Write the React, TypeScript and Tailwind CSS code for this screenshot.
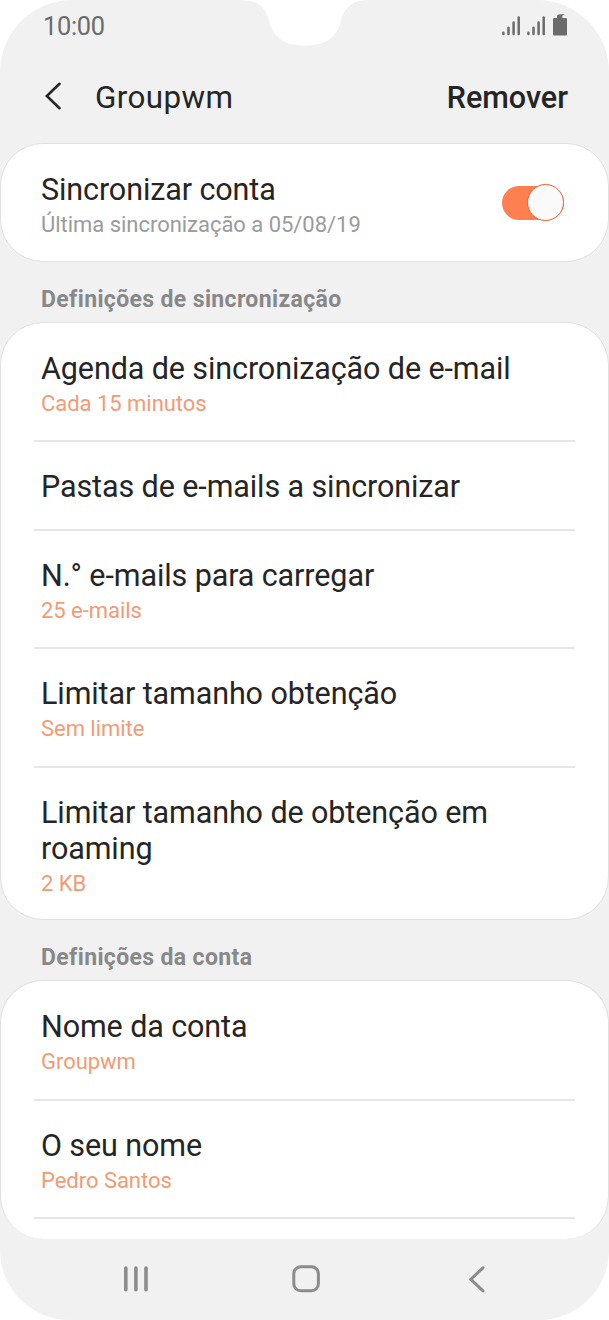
type Setting = { title: string; value?: string; box: string };

const syncSettings: Setting[] = [
  { title: "Agenda de sincronização de e-mail", value: "Cada 15 minutos", box: "h-[119px] pt-[28px]" },
  { title: "Pastas de e-mails a sincronizar", box: "h-[89px] pt-[27px]" },
  { title: "N.° e-mails para carregar", value: "25 e-mails", box: "h-[118px] pt-[27px]" },
  { title: "Limitar tamanho obtenção", value: "Sem limite", box: "h-[119px] pt-[27px]" },
  { title: "Limitar tamanho de obtenção em roaming", value: "2 KB", box: "h-[151px] pt-[27px]" },
];

const accountSettings: Setting[] = [
  { title: "Nome da conta", value: "Groupwm", box: "h-[120px] pt-[28px]" },
  { title: "O seu nome", value: "Pedro Santos", box: "h-[118px] pt-[27px]" },
];

function SettingRow({ item, divider }: { item: Setting; divider: boolean }) {
  return (
    <div
      className={`${item.box} mx-[33px] shrink-0 pl-[7px] ${divider ? "border-b-2 border-[#e6e6e6]" : ""}`}
    >
      <div className="text-[30.5px] leading-[36px] tracking-[-0.1px] text-[#252525]">{item.title}</div>
      {item.value && <div className="text-[22px] leading-[34px] tracking-[-0.03px] text-[#f29b75]">{item.value}</div>}
    </div>
  );
}

function SectionTitle({ children }: { children: string }) {
  return (
    <h2 className="flex h-[60px] shrink-0 items-center pl-[41px] pt-[14px] text-[23px] leading-[27px] font-bold tracking-[0.36px] text-[#888888]">
      {children}
    </h2>
  );
}

function SignalIcon() {
  return (
    <svg width="18" height="20" viewBox="0 0 18 20" className="shrink-0" stroke="#6b6b6b" strokeWidth="2.5" strokeLinecap="round">
      <path d="M1.4 16.7v1.3M6.5 11.7v6.3M11.6 6.6v11.4M16.7 1.6v16.4" />
    </svg>
  );
}

function StatusBar() {
  return (
    <div className="flex h-[52px] shrink-0 items-center justify-between pl-[43px] pr-[42px]">
      <span className="text-[25.4px] leading-[30px] tracking-[-0.3px] text-[#6b6b6b]">10:00</span>
      <div className="flex items-center">
        <SignalIcon />
        <span className="w-[7px]" />
        <SignalIcon />
        <svg width="14" height="22" viewBox="0 0 14 22" className="mb-[2px] ml-2" fill="#6b6b6b">
          <path d="M0 5.3Q0 4 1.3 4H4V1.8L5.5.6 12 0 9.3 1.6V4h3.4Q14 4 14 5.3v15Q14 21.6 12.7 21.6H1.3Q0 21.6 0 20.3Z" />
        </svg>
      </div>
    </div>
  );
}

function Header() {
  return (
    <header className="flex h-[91px] shrink-0 items-center pl-[45px] pr-[41px]">
      <svg width="16" height="28" viewBox="0 0 16 28" className="mb-[3px]" fill="none" stroke="#252525" strokeWidth="2.6" strokeLinecap="round">
        <path d="M14.5 1.8 1.8 14l12.7 12.2" />
      </svg>
      <h1 className="ml-[34px] text-[31.4px] leading-[36px] tracking-[0.4px] text-[#252525]">Groupwm</h1>
      <button className="ml-auto text-[30.5px] leading-[36px] font-medium text-[#252525]">Remover</button>
    </header>
  );
}

function NavigationBar() {
  return (
    <nav className="flex h-[81px] shrink-0 items-center justify-between pb-[2px] pl-[123px] pr-[124px]">
      <svg width="26" height="28" viewBox="0 0 26 28" stroke="#8c8c8c" strokeWidth="3.6" strokeLinecap="round">
        <path d="M2.8 3v21.8M12.9 3v21.8M23 3v21.8" />
      </svg>
      <svg width="28" height="28" viewBox="0 0 28 28" fill="none" stroke="#8c8c8c" strokeWidth="3" className="-ml-[7px]">
        <rect x="1.8" y="1.8" width="24.6" height="24" rx="7" />
      </svg>
      <svg width="16" height="28" viewBox="0 0 16 28" fill="none" stroke="#8c8c8c" strokeWidth="3" strokeLinecap="round">
        <path d="M14 2.8 1.8 14.4 14 25.8" />
      </svg>
    </nav>
  );
}

export default function App() {
  return (
    <div className="h-[1320px] w-[609px] bg-white font-['Roboto',sans-serif]">
      <div className="relative flex h-full w-full flex-col overflow-hidden rounded-t-[72px] rounded-b-[70px] bg-[#f1f1f1]">
        <svg width="134" height="46" viewBox="0 0 134 46" className="absolute left-[239px] top-0" fill="white">
          <path d="M0 0C17 0 25 5 29 18C34 37 44 45.5 66 45.5C88 45.5 98 37 103 18C107 5 115 0 132 0Z" />
        </svg>
        <StatusBar />
        <Header />
        <section className="flex h-[119px] shrink-0 items-center justify-between rounded-[43px] border border-[#e0e0e0] bg-white pl-[40px] pr-[44px]">
          <div className="pt-[8px]">
            <div className="text-[30.5px] leading-[36px] tracking-[-0.1px] text-[#252525]">Sincronizar conta</div>
            <div className="text-[22px] leading-[34px] tracking-[-0.03px] text-[#9b9b9b]">Última sincronização a 05/08/19</div>
          </div>
          <div className="flex h-[34px] w-[62px] items-center justify-end rounded-full bg-[#ff7f50] pr-[0.5px]">
            <div className="h-[37px] w-[37px] shrink-0 rounded-full border-[1.5px] border-[#ee6030] bg-[#fafafa]" />
          </div>
        </section>
        <SectionTitle>Definições de sincronização</SectionTitle>
        <section className="flex h-[598px] shrink-0 flex-col rounded-[43px] border border-[#e0e0e0] bg-white">
          {syncSettings.map((item, i) => (
            <SettingRow key={item.title} item={item} divider={i < syncSettings.length - 1} />
          ))}
        </section>
        <SectionTitle>Definições da conta</SectionTitle>
        <section className="flex h-[259px] shrink-0 flex-col overflow-hidden rounded-[43px] border border-b-0 border-[#e0e0e0] bg-white">
          {accountSettings.map((item) => (
            <SettingRow key={item.title} item={item} divider />
          ))}
        </section>
        <NavigationBar />
      </div>
    </div>
  );
}
